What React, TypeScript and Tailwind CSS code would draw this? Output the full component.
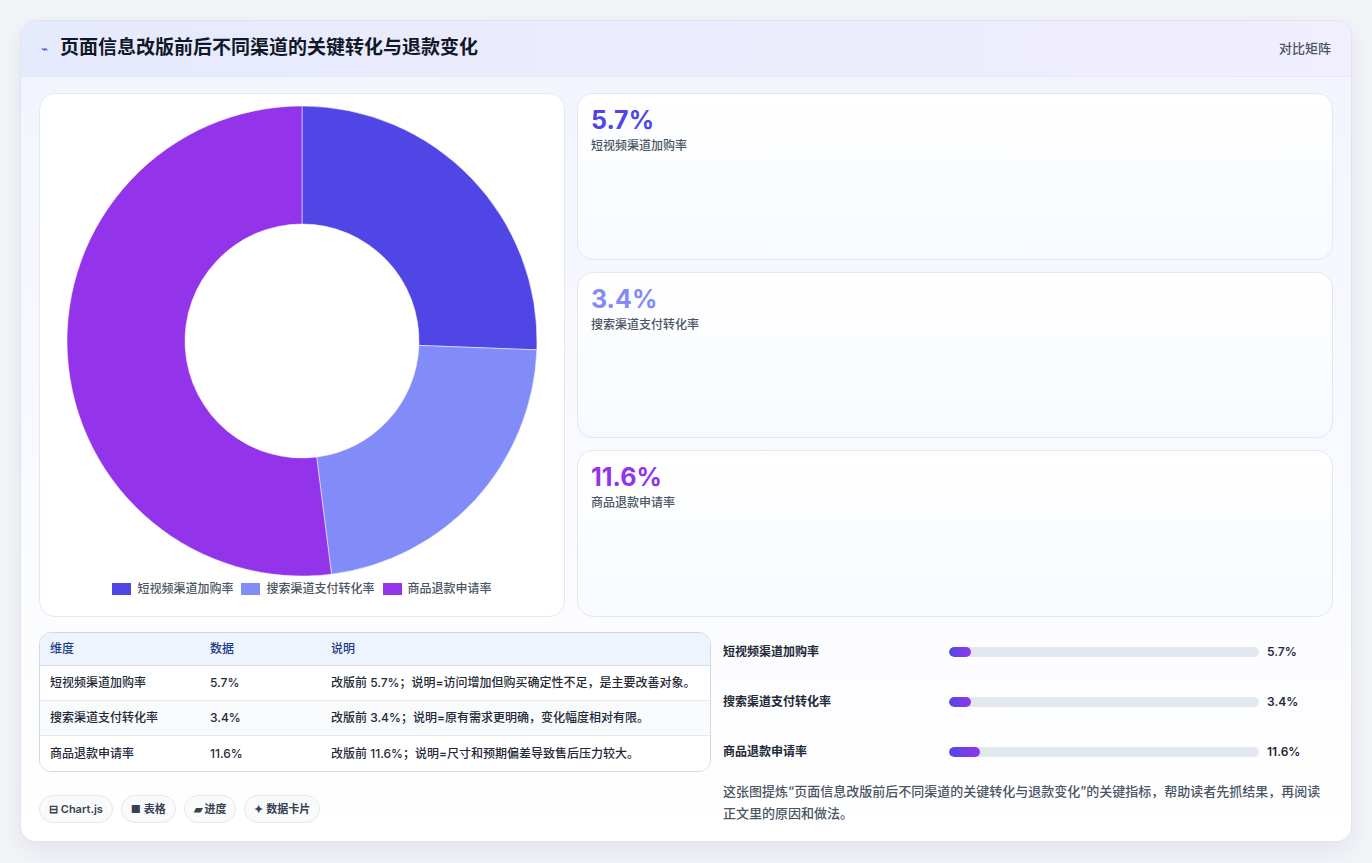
import React from "react";

const data = [
  { name: "短视频渠道加购率", v: 5.7, f: 0.256, color: "#4f46e5", note: "改版前 5.7%；说明=访问增加但购买确定性不足，是主要改善对象。", w: 7 },
  { name: "搜索渠道支付转化率", v: 3.4, f: 0.224, color: "#818cf8", note: "改版前 3.4%；说明=原有需求更明确，变化幅度相对有限。", w: 7 },
  { name: "商品退款申请率", v: 11.6, f: 0.52, color: "#9333ea", note: "改版前 11.6%；说明=尺寸和预期偏差导致售后压力较大。", w: 10 },
];

function Donut() {
  const cx = 235, cy = 235, R = 235, r = 117;
  let a = -Math.PI / 2;
  const paths = data.map((d) => {
    const a2 = a + d.f * Math.PI * 2;
    const large = a2 - a > Math.PI ? 1 : 0;
    const p = (rad: number, ang: number) => `${cx + rad * Math.cos(ang)} ${cy + rad * Math.sin(ang)}`;
    const path = `M ${p(R, a)} A ${R} ${R} 0 ${large} 1 ${p(R, a2)} L ${p(r, a2)} A ${r} ${r} 0 ${large} 0 ${p(r, a)} Z`;
    a = a2;
    return <path key={d.name} d={path} fill={d.color} stroke="#fff" strokeWidth="0.5" />;
  });
  return <svg width="470" height="470" viewBox="0 0 470 470">{paths}</svg>;
}

export default function App() {
  return (
    <div className="w-[1372px] h-[863px] bg-[#f3f4f8] p-5" style={{ fontFamily: "Inter, 'Noto Sans CJK SC', sans-serif" }}>
      <div className="h-[822px] rounded-2xl border border-[#dfe3f3] bg-white overflow-hidden shadow-[0_8px_24px_rgba(30,41,90,0.08)] flex flex-col">
        <div className="h-[56px] shrink-0 flex items-center justify-between px-5 bg-gradient-to-r from-[#e6eafd] to-[#f1eefe] border-b border-[#e4e7f5]">
          <div className="flex items-center gap-3">
            <span className="text-[#4f46e5] text-xs">⌁</span>
            <span className="text-[19px] font-bold text-[#111827]">页面信息改版前后不同渠道的关键转化与退款变化</span>
          </div>
          <span className="text-[13px] text-[#4b5563] font-medium">对比矩阵</span>
        </div>
        <div className="flex-1 px-[18px] pt-4 bg-gradient-to-b from-[#f3f5fe] to-white">
          <div className="flex gap-3 h-[524px]">
            <div className="w-[526px] rounded-2xl border border-[#e5e8f2] bg-white flex flex-col items-center pt-3">
              <Donut />
              <div className="flex gap-2 mt-[4px] text-[12px] font-medium text-[#4b5563]">
                {data.map((d) => (
                  <div key={d.name} className="flex items-center gap-[6px]">
                    <span className="w-[19px] h-[12px]" style={{ background: d.color }} />
                    <span>{d.name}</span>
                  </div>
                ))}
              </div>
            </div>
            <div className="flex-1 flex flex-col gap-3">
              {data.map((d) => (
                <div key={d.name} className="flex-1 rounded-2xl border border-[#e3e7f2] bg-gradient-to-b from-white to-[#f8faff] px-[13px] pt-[10px]">
                  <div className="text-[25px] font-bold leading-[32px]" style={{ color: d.color }}>{d.v}%</div>
                  <div className="text-[12px] font-medium text-[#4b5563] mt-[1px]">{d.name}</div>
                </div>
              ))}
            </div>
          </div>
          <div className="flex gap-3 mt-[15px]">
            <div className="w-[672px]">
              <div className="rounded-xl border border-[#cfd8e8] overflow-hidden text-[12px] font-medium text-[#1f2937]">
                <div className="flex h-[33px] items-center bg-[#eef4fe] text-[#1e3a8a] border-b border-[#d6deec]">
                  <div className="w-[170px] pl-[10px]">维度</div>
                  <div className="w-[121px]">数据</div>
                  <div>说明</div>
                </div>
                {data.map((d, i) => (
                  <div key={d.name} className={`flex h-[35px] items-center ${i < 2 ? "border-b border-[#e2e8f0]" : ""} ${i === 1 ? "bg-[#f8fafc]" : "bg-white"}`}>
                    <div className="w-[170px] pl-[10px]">{d.name}</div>
                    <div className="w-[121px]">{d.v}%</div>
                    <div>{d.note}</div>
                  </div>
                ))}
              </div>
              <div className="flex gap-2 mt-[23px] text-[11px] font-semibold text-[#374151]">
                {["⊟ Chart.js", "■ 表格", "▰ 进度", "✦ 数据卡片"].map((t) => (
                  <span key={t} className="h-[28px] px-[9px] flex items-center rounded-full border border-[#e5e7eb] bg-[#f8fafc]">{t}</span>
                ))}
              </div>
            </div>
            <div className="flex-1 pt-[10px]">
              {data.map((d) => (
                <div key={d.name} className="flex items-center h-[20px] mb-[30px] text-[12px] font-semibold text-[#1f2937]">
                  <div className="w-[226px]">{d.name}</div>
                  <div className="w-[310px] h-[10px] rounded-full bg-[#e2e8f0] overflow-hidden">
                    <div className="h-full rounded-full bg-gradient-to-r from-[#4f46e5] to-[#9333ea]" style={{ width: `${d.w}%` }} />
                  </div>
                  <div className="ml-2">{d.v}%</div>
                </div>
              ))}
              <p className="text-[13px] leading-[22px] text-[#4b5563] font-medium mt-[-12px]">
                这张图提炼“页面信息改版前后不同渠道的关键转化与退款变化”的关键指标，帮助读者先抓结果，再阅读正文里的原因和做法。
              </p>
            </div>
          </div>
        </div>
      </div>
    </div>
  );
}
